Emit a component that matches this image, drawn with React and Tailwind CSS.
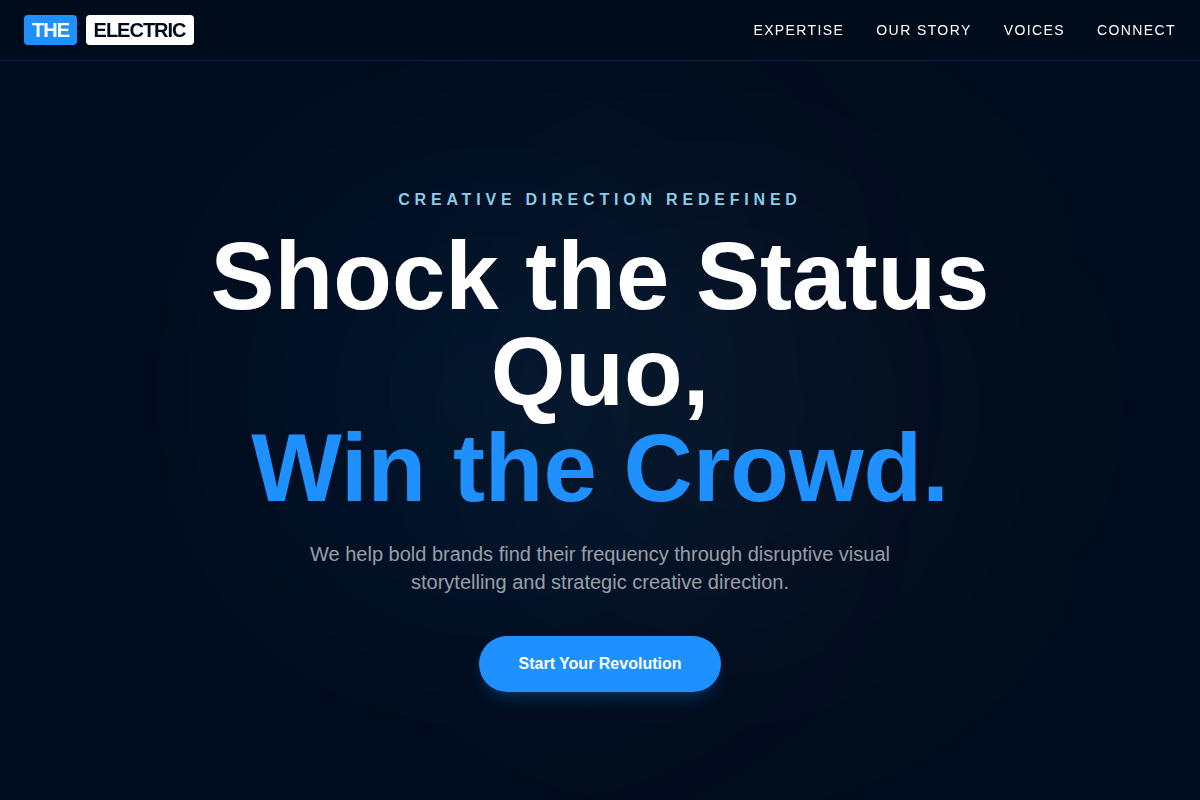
const NAV_LINKS = [
    { label: "Expertise", href: "#expertise" },
    { label: "Our Story", href: "#story" },
    { label: "Voices", href: "#voices" },
    { label: "Connect", href: "#connect" },
];

export default function App() {
    return (
        <div
            id="top"
            className="min-h-screen bg-[#000c1d] font-['Liberation_Sans',Arial,sans-serif] text-white"
        >
            <Header />
            <Hero />
        </div>
    );
}

function Header() {
    return (
        <header className="fixed inset-x-0 top-0 z-10 flex items-center justify-between border-b border-[#1e90ff]/20 bg-[#000c1d]/90 px-6 py-4 backdrop-blur-md">
            <a href="#top" className="text-xl font-bold tracking-tighter">
                <span className="mr-1 rounded-sm bg-[#1e90ff] px-2 py-1">
                    THE
                </span>{" "}
                <span className="rounded-sm bg-white px-2 py-1 text-[#000c1d]">
                    ELECTRIC
                </span>
            </a>

            <nav className="flex gap-8 text-sm tracking-widest uppercase">
                {NAV_LINKS.map((link) => (
                    <a key={link.href} href={link.href}>
                        {link.label}
                    </a>
                ))}
            </nav>
        </header>
    );
}

function Hero() {
    return (
        <main className="relative flex min-h-screen items-center justify-center overflow-hidden px-6 pt-20">
            {/* Soft glows behind the copy */}
            <div className="absolute top-1/4 left-1/4 h-96 w-96 rounded-full bg-[#1e90ff]/10 blur-[150px]" />
            <div className="absolute right-1/4 bottom-1/4 h-96 w-96 rounded-full bg-white/5 blur-[150px]" />

            <div className="relative max-w-4xl text-center">
                <p className="mb-4 font-bold tracking-[0.3em] text-[#87ceeb] uppercase">
                    Creative Direction Redefined
                </p>
                <h1 className="mb-6 text-8xl leading-none font-bold">
                    Shock the Status Quo,
                    <br />
                    <span className="text-[#1e90ff]">Win the Crowd.</span>
                </h1>
                <p className="mx-auto mb-10 max-w-2xl text-xl text-white/60">
                    We help bold brands find their frequency through disruptive
                    visual storytelling and strategic creative direction.
                </p>
                <button
                    type="button"
                    className="rounded-full bg-[#1e90ff] px-10 py-4 font-bold shadow-lg shadow-[#1e90ff]/20"
                >
                    Start Your Revolution
                </button>
            </div>
        </main>
    );
}
